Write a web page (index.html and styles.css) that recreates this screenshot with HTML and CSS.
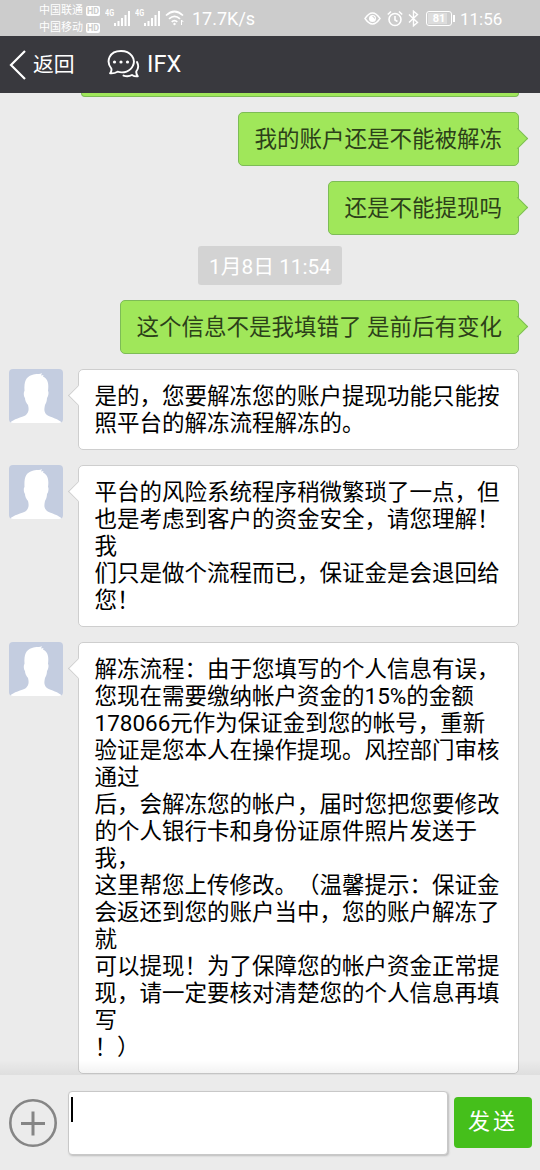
FILE: index.html
```
<!DOCTYPE html>
<html lang="zh-CN">
<head>
<meta charset="utf-8">
<title>IFX</title>
<link rel="stylesheet" href="styles.css">
</head>
<body>
<svg class="defs" width="0" height="0">
  <symbol id="person" viewBox="0 0 54 54">
    <path fill="#fff" d="M1 54C4 50 13 48.500 17 46C20 43 20 40 19 36C17 34 16 31 16 29C14.500 27 14.500 23 15.500 22C15 12 17 8 23 6C27 4.500 31 5.500 33 4L32 6.500L34.500 6L34 7.500C39 10 40 15 39 22C40 23 39.500 27 38 29C38 32 37 34 36 36C35 41 35 43 38 46C42 48.500 50 50 53 54Z"/>
  </symbol>
  <symbol id="signal" viewBox="0 0 27 18">
    <path fill="#fff" d="M9 14h2v3h-2zM12.500 12h2v5h-2zM16 9h2v8h-2zM19.500 6h2v11h-2zM23 2h2v15h-2z"/>
  </symbol>
</svg>
<div class="screen">
  <header class="status">
    <div class="carriers">
      <div class="carrier">中国联通<b>HD</b></div>
      <div class="carrier">中国移动<b>HD</b></div>
    </div>
    <div class="cell"><span>4G</span><svg width="27" height="18"><use href="#signal"/></svg></div>
    <div class="cell"><span>4G</span><svg width="27" height="18"><use href="#signal"/></svg></div>
    <svg class="wifi" width="20" height="18" viewBox="0 0 20 18" fill="none" stroke="#fff" stroke-width="1.700">
      <path d="M1 6.500Q9.500-1.500 18 6.500M4 9.800Q9.500 4.800 15 9.800M6.700 12.800Q9.500 10.300 12.300 12.800"/>
      <circle cx="9.500" cy="15" r="1.200" fill="#fff" stroke="none"/><path d="M16.500 11v5M16.500 11l1.800 2" stroke-width="1"/>
    </svg>
    <span class="speed">17.7K/s</span>
    <div class="tray">
      <svg width="17" height="13" viewBox="0 0 17 13" fill="none" stroke="#fff" stroke-width="1.400"><path d="M1 6.500Q8.500-4.500 16 6.500Q8.500 17.500 1 6.500Z"/><circle cx="8.500" cy="6.500" r="3.500" fill="#fff" stroke="none"/><path d="M8.500 4.500Q10.500 4.500 10.500 6.500" stroke="#ccc" stroke-width="1"/></svg>
      <svg class="alarm" width="16" height="17" viewBox="0 0 16 17" fill="none" stroke="#fff" stroke-width="1.600"><circle cx="8" cy="9.500" r="6"/><path d="M8 6v4l2.500 1.500M.8 4.500L4 1.500M15.200 4.500L12 1.500"/></svg>
      <svg class="bt" width="11" height="17" viewBox="0 0 11 17" fill="none" stroke="#fff" stroke-width="1.400"><path d="M1 4.500L9.500 12.500L5.500 15.800V1.200L9.500 4.500L1 12.500"/></svg>
      <div class="battery"><span>81</span></div>
      <span class="clock">11:56</span>
    </div>
  </header>
  <nav class="bar">
    <svg class="back" width="18" height="30" viewBox="0 0 18 30" fill="none" stroke="#fff" stroke-width="2.200"><path d="M16 1L2 15L16 29"/></svg>
    <span class="back-label">返回</span>
    <svg class="chat" width="33" height="28" viewBox="0 0 33 28" fill="none" stroke="#fff" stroke-width="1.900" stroke-linecap="round" stroke-linejoin="round">
      <path d="M4.300 18.500C-1.500 11 2.500 1 14 1C24 1 29 9 26 15.500C23.500 21.500 16.500 23.500 10.500 21.700C8.500 23 6 23.600 3 23.300C4.300 22 4.800 20.500 4.300 18.500Z"/>
      <path d="M30 12C32 16 31.300 19 29.300 21.300C29 23.500 29.800 25 30.800 26.300C28.500 26.700 26.500 26 25 25C22.500 26.400 19.500 26.600 16.500 25.600"/>
      <g fill="#fff" stroke="none"><circle cx="7.500" cy="12" r="1.600"/><circle cx="14" cy="12" r="1.600"/><circle cx="20.500" cy="12" r="1.600"/></g>
    </svg>
    <span class="title">IFX</span>
  </nav>
  <main class="thread">
    <div class="bubble mine clipped"></div>
    <div class="bubble mine">我的账户还是不能被解冻<i class="tip"></i></div>
    <div class="bubble mine">还是不能提现吗<i class="tip"></i></div>
    <div class="date">1月8日 11:54</div>
    <div class="bubble mine">这个信息不是我填错了 是前后有变化<i class="tip"></i></div>
    <div class="row">
      <svg class="avatar"><use href="#person"/></svg>
      <div class="bubble theirs">是的，您要解冻您的账户提现功能只能按<br>照平台的解冻流程解冻的。<i class="tip"></i></div>
    </div>
    <div class="row">
      <svg class="avatar"><use href="#person"/></svg>
      <div class="bubble theirs">平台的风险系统程序稍微繁琐了一点，但<br>也是考虑到客户的资金安全，请您理解！<br>我<br>们只是做个流程而已，保证金是会退回给<br>您！<i class="tip"></i></div>
    </div>
    <div class="row">
      <svg class="avatar"><use href="#person"/></svg>
      <div class="bubble theirs">解冻流程：由于您填写的个人信息有误，<br>您现在需要缴纳帐户资金的15%的金额<br>178066元作为保证金到您的帐号，重新<br>验证是您本人在操作提现。风控部门审核<br>通过<br>后，会解冻您的帐户，届时您把您要修改<br>的个人银行卡和身份证原件照片发送于<br>我，<br>这里帮您上传修改。（温馨提示：保证金<br>会返还到您的账户当中，您的账户解冻了<br>就<br>可以提现！为了保障您的帐户资金正常提<br>现，请一定要核对清楚您的个人信息再填<br>写<br>！）<i class="tip"></i></div>
    </div>
  </main>
  <footer class="composer">
    <svg class="plus" width="48" height="48" viewBox="0 0 48 48" fill="none" stroke="#858585"><circle cx="24" cy="24" r="22.700" stroke-width="2.600"/><path d="M12 24.500H36M24 12.500V36.500" stroke-width="3"/></svg>
    <div class="input"><span class="caret"></span></div>
    <div class="send">发送</div>
  </footer>
</div>
</body>
</html>
```
FILE: styles.css
```
* { box-sizing: border-box; }
body { margin: 0; font-family: Roboto, "Noto Sans CJK SC", sans-serif; text-spacing-trim: space-all; }
svg { display: block; flex: none; }
.defs { position: absolute; }
.screen { width: 540px; height: 1170px; display: flex; flex-direction: column; overflow: hidden; background: #ebebeb; }

.status { height: 36px; flex: none; display: flex; align-items: center; background: #ccc; color: #fff; padding: 0 37px 0 39px; }
.carriers { width: 66px; padding-top: 3px; }
.carrier { display: flex; align-items: center; gap: 3px; height: 16.500px; font-size: 11px; line-height: 16px; white-space: nowrap; }
.carrier b { width: 14px; height: 10px; border-radius: 2px; background: #fff; color: #ccc; font: 700 9px/10px Roboto, sans-serif; text-align: center; }
.cell { position: relative; width: 27px; margin-right: 3px; }
.cell span { position: absolute; left: 0; top: 0; font: 700 9px/9px Roboto, sans-serif; transform: scaleX(.8); transform-origin: left; }
.speed { font-size: 18px; line-height: 36px; margin-left: 7px; padding-top: 1px; }
.tray { margin-left: auto; display: flex; align-items: center; height: 36px; }
.alarm { margin-left: 6px; }
.bt { margin-left: 5px; }
.battery { position: relative; width: 26px; height: 15px; margin-left: 7px; border: 1px solid #fff; border-radius: 3px; padding: 1px; }
.battery span { display: block; width: 19px; height: 11px; background: #dcdcdc; color: #fff; font: 700 11px/11px Roboto, sans-serif; text-align: center; padding-left: 3px; }
.battery::after { content: ""; position: absolute; left: 26px; top: 3px; width: 2px; height: 7px; background: #fff; }
.clock { font-size: 17px; line-height: 36px; margin-left: 8px; width: 43px; padding-top: 1px; white-space: nowrap; }

.bar { height: 57px; flex: none; display: flex; align-items: center; background: #39393e; color: #fff; padding: 0 0 2px 9px; z-index: 2; }
.back { margin-top: 2px; }
.back-label { font-size: 20.800px; margin: -2px 0 0 6px; width: 42px; white-space: nowrap; }
.chat { margin-left: 32px; }
.title { font-size: 23.500px; margin-left: 7px; padding-top: 1px; }

.thread { flex: none; height: 982px; display: flex; flex-direction: column; align-items: flex-end; gap: 15px; padding: 0 21.500px 0 9px; }
.bubble { position: relative; flex: none; border: 1px solid #cecece; border-radius: 5px; background: #fff; color: #000; font-size: 22.500px; line-height: 27px; padding: 13px 15.500px 12px; min-height: 54px; white-space: nowrap; }
.mine { background: #a0e75a; border-color: #7dbc56; color: #2c4019; }
.clipped { width: 438px; height: 4px; min-height: 0; padding: 0; border-top: 0; border-radius: 0 0 5px 5px; }
.tip { position: absolute; width: 15px; height: 15px; top: 17.500px; background: inherit; border: 1px solid; border-color: inherit; }
.mine .tip { right: -7px; border-left: 0; border-bottom: 0; transform: rotate(45deg); }
.theirs .tip { left: -8px; border-top: 0; border-right: 0; transform: rotate(45deg); }
.date { align-self: center; position: relative; left: 6.250px; flex: none; width: 144px; height: 39px; margin: -4px 0 0; border-radius: 3px; background: #d3d3d3; color: #fff; font-size: 20.800px; line-height: 39px; text-align: center; padding-top: 2px; }
.row { width: 100%; display: flex; gap: 15px; align-items: flex-start; }
.row .bubble { flex: 1; }
.avatar { width: 54px; height: 54px; border-radius: 4px; background: #c4cde0; }

.composer { position: relative; flex: 1; display: flex; align-items: center; background: #ebebeb; padding: 0 7.500px 0 9px; }
.composer::before { content: ""; position: absolute; left: 0; right: 0; top: -15px; height: 15px; background: linear-gradient(rgba(0,0,0,0), rgba(0,0,0,.055)); }
.input { width: 380px; height: 64px; margin-left: 11px; border: 1px solid #c8c8c8; border-radius: 4px; background: #fff; box-shadow: 1px 1px 2px #bbb; padding: 5px 2px; }
.caret { display: block; width: 2px; height: 25px; background: #000; }
.send { width: 78px; height: 51px; margin-left: 6px; border-radius: 4px; background: #45bf1b; color: #fff; font-size: 22px; line-height: 50px; letter-spacing: 3px; padding-left: 14px; white-space: nowrap; }
```
